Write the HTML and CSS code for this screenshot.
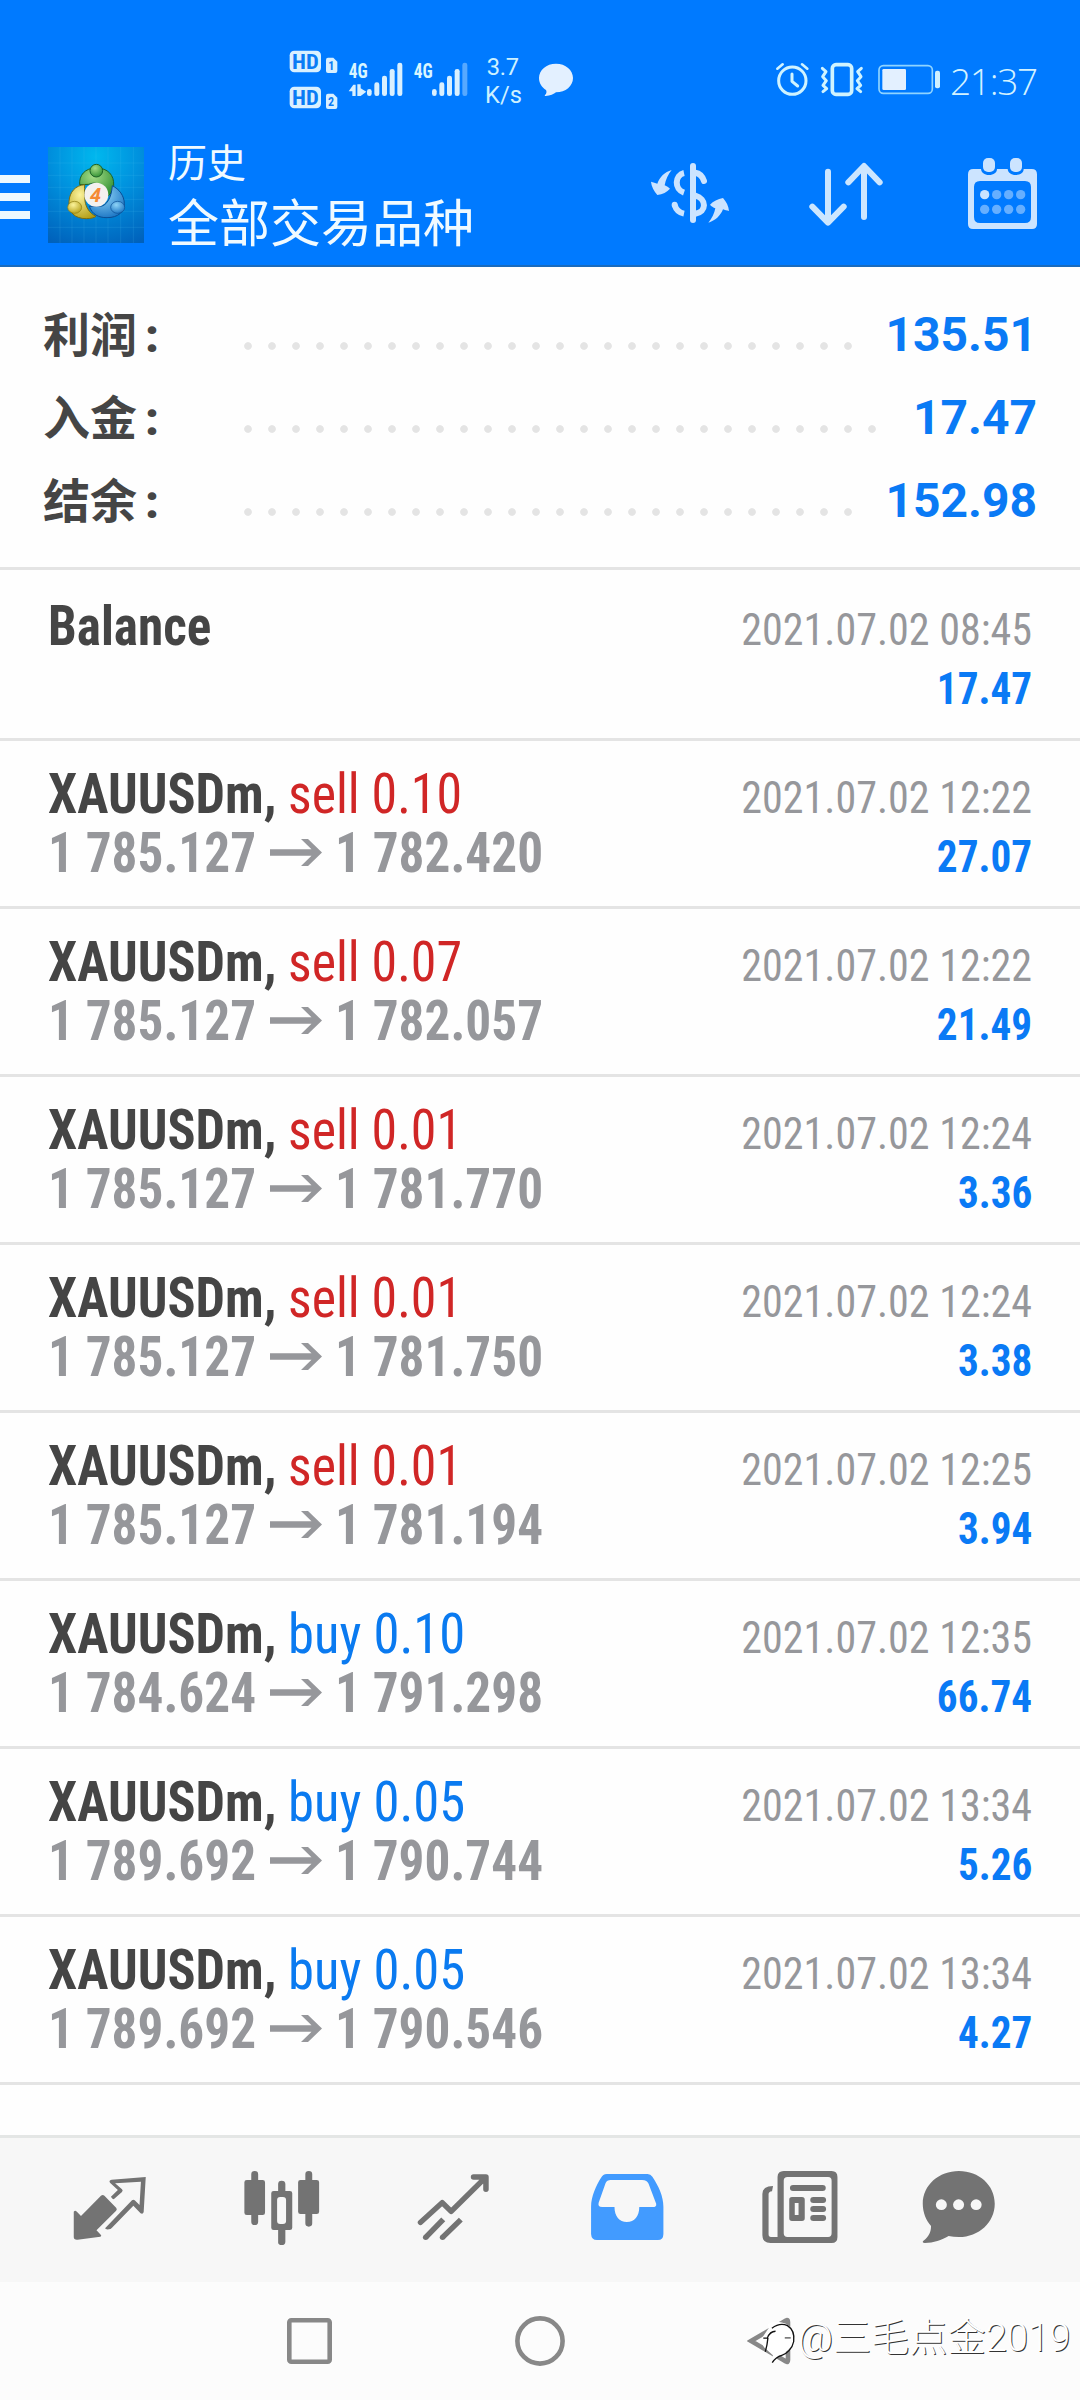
FILE: index.html
```
<!DOCTYPE html>
<html lang="zh-CN">
<head>
<meta charset="utf-8">
<title>历史</title>
<link rel="stylesheet" href="styles.css">
</head>
<body>
<div class="screen">
  <header class="top">
    <div class="status">
      <svg class="status-left" viewBox="0 0 960 300">
        <g fill="#d9f0ff">
          <rect x="59" y="62" width="94" height="65" rx="14"/>
          <rect x="59" y="170" width="94" height="65" rx="14"/>
          <path d="M174 83h16l12 12v28q0 6-6 6h-22q-6 0-6-6v-34q0-6 6-6z"/>
          <path d="M174 191h16l12 12v28q0 6-6 6h-22q-6 0-6-6v-34q0-6 6-6z"/>
          <path d="M236 184l14-20h7v34h-10v-14zM262 163h10v12l17 10-17 13h-10z"/>
          <rect x="291" y="177" width="14" height="21" rx="7"/>
          <rect x="313" y="157" width="15" height="41" rx="7"/>
          <rect x="336" y="137" width="15" height="61" rx="7"/>
          <rect x="359" y="117" width="15" height="81" rx="7"/>
          <rect x="382" y="98" width="15" height="100" rx="7"/>
          <rect x="486" y="177" width="14" height="21" rx="7"/>
          <rect x="508" y="157" width="15" height="41" rx="7"/>
          <rect x="531" y="137" width="15" height="61" rx="7"/>
          <rect x="554" y="117" width="15" height="81" rx="7"/>
          <rect x="577" y="98" width="15" height="100" rx="7" opacity=".4"/>
        </g>
        <path fill="#e3f0ff" d="M858 101c29 0 51 19 51 43s-22 43-51 43c-6 5-18 11-31 11-5 0-2-3 1-7 2-3 2-7 0-11-12-8-21-20-21-36 0-24 22-43 51-43z"/>
        <g class="badge">
          <text x="66" y="116" textLength="80" lengthAdjust="spacingAndGlyphs">HD</text>
          <text x="66" y="224" textLength="80" lengthAdjust="spacingAndGlyphs">HD</text>
        </g>
        <text class="sim" x="175" y="120">1</text>
        <text class="sim" x="174" y="229">2</text>
        <text class="gen" x="236" y="143" textLength="57" lengthAdjust="spacingAndGlyphs">4G</text>
        <text class="gen" x="431" y="143" textLength="57" lengthAdjust="spacingAndGlyphs">4G</text>
        <text class="rate" x="650" y="135" textLength="97">3.7</text>
        <text class="rate" x="645" y="219" textLength="111">K/s</text>
      </svg>
      <svg class="status-right" viewBox="0 0 552 240">
        <g fill="none" stroke="#cff3ff" stroke-linecap="round" stroke-linejoin="round">
          <circle cx="97" cy="122" r="41" stroke-width="9"/>
          <path d="M96 102v22l17 14" stroke-width="9"/>
          <path d="M52 86l16-13M142 86l-16-13" stroke-width="8" />
          <rect x="217" y="74" width="58" height="89" rx="11" stroke-width="11"/>
          <path d="M187 85l11 10-10 15 11 12-10 14 11 10-11 9M304 85l-11 10 10 15-11 12 10 14-11 10 11 9" stroke-width="9"/>
          <rect x="357" y="77" width="160" height="83" rx="13" stroke="#8fd4ff" stroke-width="5"/>
        </g>
        <rect x="367" y="87" width="71" height="63" rx="4" fill="#e3f0ff"/>
        <rect x="525" y="92" width="15" height="53" rx="6" fill="#cff0ff"/>
      </svg>
      <span class="clock">21:37</span>
    </div>
    <div class="toolbar">
      <div class="menu"><i></i><i></i><i></i></div>
      <svg class="logo" viewBox="144 51 288 288">
        <defs>
          <radialGradient id="sky" cx=".5" cy=".1" r="1"><stop offset="0" stop-color="#00b8ee"/><stop offset=".45" stop-color="#0091de"/><stop offset="1" stop-color="#0061bb"/></radialGradient>
          <radialGradient id="gr" cx=".4" cy=".3" r=".8"><stop offset="0" stop-color="#a5dc87"/><stop offset="1" stop-color="#278a2c"/></radialGradient>
          <radialGradient id="ye" cx=".4" cy=".3" r=".8"><stop offset="0" stop-color="#fbf39b"/><stop offset="1" stop-color="#b09a10"/></radialGradient>
          <radialGradient id="bl" cx=".4" cy=".3" r=".8"><stop offset="0" stop-color="#8fd4f7"/><stop offset="1" stop-color="#126ec0"/></radialGradient>
        </defs>
        <path fill="url(#sky)" d="M144 51h288v288H144z"/>
        <path stroke="#5cc8f2" stroke-width="2" opacity=".22" fill="none" d="M144 99h288M144 136h288M144 172h288M144 208h288M144 244h288M144 292h288M180 51v288M216 51v288M252 51v288M288 51v288M324 51v288M362 51v288M400 51v288"/>
        <path fill="url(#gr)" stroke="#1d6227" stroke-width="3" d="M239 164c-2-28 15-50 50-50s54 22 52 52c-1 15-6 24-18 33l-16-28c-10-13-27-14-41-8z"/>
        <path fill="url(#bl)" stroke="#0b4d93" stroke-width="3" d="M337 167c20 10 36 30 36 54s-18 42-52 42c-26 0-44-9-53-34h34c18-3 32-24 35-62z"/>
        <path fill="url(#ye)" stroke="#7c6d10" stroke-width="3" d="M254 164c-28 2-45 22-47 50-2 32 16 52 52 52 14 0 24-3 29-7-19-9-30-26-33-46-1-19-2-33-1-49z"/>
        <circle cx="289" cy="122" r="19" fill="url(#gr)" stroke="#1d6227" stroke-width="3"/>
        <ellipse cx="224" cy="232" rx="21" ry="18" fill="url(#ye)" stroke="#8d7b10" stroke-width="2"/>
        <ellipse cx="353" cy="232" rx="21" ry="18" fill="url(#bl)" stroke="#0b4d93" stroke-width="2"/>
        <circle cx="289" cy="194" r="36" fill="#f3f1ef"/>
        <text class="four" x="271" y="215">4</text>
      </svg>
      <div class="heading">
        <div class="sub">历史</div>
        <div class="main">全部交易品种</div>
      </div>
      <svg class="act dollar" viewBox="90 81 240 219">
        <g fill="#cce4ff">
          <path d="M155 120c-10 12-18 29-21 46 6 3 12 6 16 10-9 10-22 17-38 19-10-11-18-26-19-40 7 2 13 4 19 6 7-20 22-35 43-41z"/>
          <path d="M265 278c11-13 18-28 21-43-6-3-12-6-16-11 10-10 23-17 39-20 10 11 17 25 18 39-6-1-13-3-18-5-8 20-23 34-44 40z"/>
          <rect x="210" y="99" width="18" height="180" rx="9"/>
        </g>
        <path fill="none" stroke="#cce4ff" stroke-width="18" d="M192 129c-28 6-30 49 0 59M192 251c-15-3-24-12-28-26"/>
        <path fill="none" stroke="#cce4ff" stroke-width="18" stroke-linecap="round" d="M226 128c14 2 21 9 26 25M226 197c35 10 34 49 0 54M164 224v1"/>
      </svg>
      <svg class="act sort" viewBox="561 81 234 219">
        <path fill="none" stroke="#cce6ff" stroke-width="18" stroke-linecap="round" stroke-linejoin="round" d="M624 125v152M577 230l47 48 47-48M732 261V109M685 157l47-49 47 49"/>
      </svg>
      <svg class="act cal" viewBox="1041 81 213 219">
        <path fill="#cce4ff" fill-rule="evenodd" d="M1060 117h23c1 11 10 18 24 18s24-7 24-18h32c1 11 10 18 24 18s24-7 24-18h24q16 0 16 16v149q0 15-15 15h-177q-15 0-15-15V133q0-16 16-16zM1080 153q-18 0-18 18v90q0 18 18 18h135q18 0 18-18v-90q0-18-18-18z"/>
        <rect x="1089" y="84" width="36" height="42" rx="15" fill="#cce4ff"/>
        <rect x="1170" y="84" width="36" height="42" rx="15" fill="#cce4ff"/>
        <circle cx="1094" cy="194" r="14" fill="#cce4ff"/>
        <g fill="#66afff"><circle cx="1130" cy="194" r="14"/><circle cx="1166" cy="194" r="14"/><circle cx="1202" cy="194" r="14"/><circle cx="1094" cy="238" r="14"/><circle cx="1130" cy="238" r="14"/><circle cx="1166" cy="238" r="14"/><circle cx="1202" cy="238" r="14"/></g>
      </svg>
    </div>
  </header>

  <section class="summary">
    <div class="sum"><span class="label">利润<b>:</b></span><span class="dots"></span><span class="amount">135.51</span></div>
    <div class="sum"><span class="label">入金<b>:</b></span><span class="dots"></span><span class="amount">17.47</span></div>
    <div class="sum"><span class="label">结余<b>:</b></span><span class="dots"></span><span class="amount">152.98</span></div>
  </section>

  <main class="deals">
    <article class="deal"><div class="l"><p><b class="name">Balance</b></p></div><div class="r"><time>2021.07.02 08:45</time><b>17.47</b></div></article>
    <article class="deal"><div class="l"><p><b class="sym">XAUUSDm,</b><span class="sell">sell 0.10</span></p><p class="px"><b>1 785.127</b><svg class="arrow" viewBox="0 0 52 27"><path d="M31 0h7l14 13.500L38 27h-7l10.500-10.200H0v-6.500h41.500z"/></svg><b>1 782.420</b></p></div><div class="r"><time>2021.07.02 12:22</time><b>27.07</b></div></article>
    <article class="deal"><div class="l"><p><b class="sym">XAUUSDm,</b><span class="sell">sell 0.07</span></p><p class="px"><b>1 785.127</b><svg class="arrow" viewBox="0 0 52 27"><path d="M31 0h7l14 13.500L38 27h-7l10.500-10.200H0v-6.500h41.500z"/></svg><b>1 782.057</b></p></div><div class="r"><time>2021.07.02 12:22</time><b>21.49</b></div></article>
    <article class="deal"><div class="l"><p><b class="sym">XAUUSDm,</b><span class="sell">sell 0.01</span></p><p class="px"><b>1 785.127</b><svg class="arrow" viewBox="0 0 52 27"><path d="M31 0h7l14 13.500L38 27h-7l10.500-10.200H0v-6.500h41.500z"/></svg><b>1 781.770</b></p></div><div class="r"><time>2021.07.02 12:24</time><b>3.36</b></div></article>
    <article class="deal"><div class="l"><p><b class="sym">XAUUSDm,</b><span class="sell">sell 0.01</span></p><p class="px"><b>1 785.127</b><svg class="arrow" viewBox="0 0 52 27"><path d="M31 0h7l14 13.500L38 27h-7l10.500-10.200H0v-6.500h41.500z"/></svg><b>1 781.750</b></p></div><div class="r"><time>2021.07.02 12:24</time><b>3.38</b></div></article>
    <article class="deal"><div class="l"><p><b class="sym">XAUUSDm,</b><span class="sell">sell 0.01</span></p><p class="px"><b>1 785.127</b><svg class="arrow" viewBox="0 0 52 27"><path d="M31 0h7l14 13.500L38 27h-7l10.500-10.200H0v-6.500h41.500z"/></svg><b>1 781.194</b></p></div><div class="r"><time>2021.07.02 12:25</time><b>3.94</b></div></article>
    <article class="deal"><div class="l"><p><b class="sym">XAUUSDm,</b><span class="buy">buy 0.10</span></p><p class="px"><b>1 784.624</b><svg class="arrow" viewBox="0 0 52 27"><path d="M31 0h7l14 13.500L38 27h-7l10.500-10.200H0v-6.500h41.500z"/></svg><b>1 791.298</b></p></div><div class="r"><time>2021.07.02 12:35</time><b>66.74</b></div></article>
    <article class="deal"><div class="l"><p><b class="sym">XAUUSDm,</b><span class="buy">buy 0.05</span></p><p class="px"><b>1 789.692</b><svg class="arrow" viewBox="0 0 52 27"><path d="M31 0h7l14 13.500L38 27h-7l10.500-10.200H0v-6.500h41.500z"/></svg><b>1 790.744</b></p></div><div class="r"><time>2021.07.02 13:34</time><b>5.26</b></div></article>
    <article class="deal"><div class="l"><p><b class="sym">XAUUSDm,</b><span class="buy">buy 0.05</span></p><p class="px"><b>1 789.692</b><svg class="arrow" viewBox="0 0 52 27"><path d="M31 0h7l14 13.500L38 27h-7l10.500-10.200H0v-6.500h41.500z"/></svg><b>1 790.546</b></p></div><div class="r"><time>2021.07.02 13:34</time><b>4.27</b></div></article>
  </main>

  <nav class="tabs">
    <svg viewBox="207 144 225 240" preserveAspectRatio="none"><g fill="#737373"><path d="M215 275q4-6 9 0l12 13 58-61q5-4 10 0l34 36q4 4 0 9l-57 59 13 14q3 4-2 5l-66 9q-11 1-11-8z"/><path fill-rule="evenodd" d="M319 183q1-3 6-4l99-8-6 105q-2 8-9 4l-21-23-62 66q-4 5-9 5-10 1-11-3l78-84q4-4 8 0l14 14 4-70-75 5 20 18q4 4 0 8l-24 22q-5-1-8-8l20-20-22-21q-3-3-2-6z"/></g></svg>
    <svg viewBox="705 144 225 240" preserveAspectRatio="none"><path fill="#737373" fill-rule="evenodd" d="M739 153q10 0 10 10v17h13q7 0 7 7v91q0 7-7 7h-13v20q0 10-10 10t-10-10v-20h-13q-7 0-7-7v-91q0-7 7-7h13v-17q0-10 10-10zM896 153q10 0 10 10v17h13q7 0 7 7v88q0 7-7 7h-13v28q0 10-10 10t-10-10v-28h-14q-7 0-7-7v-88q0-7 7-7h14v-17q0-10 10-10zM817 182q11 0 11 10v21h13q7 0 7 7v103q0 7-7 7h-13v35q0 10-11 10t-10-10v-35h-13q-7 0-7-7V220q0-7 7-7h13v-21q0-10 10-10zM813 231q-9 0-9 9v63q0 9 9 9h8q9 0 9-9v-63q0-9-9-9z"/></svg>
    <svg viewBox="1206 144 225 240" preserveAspectRatio="none"><path fill="none" stroke="#737373" stroke-width="16" stroke-linejoin="round" stroke-linecap="round" d="M1222 307l63-59 26 26 97-99M1376 171h36v37"/><path stroke="#737373" stroke-width="16" d="M1237 352l51-54M1286 352l53-53"/><g fill="#737373"><circle cx="1237" cy="352" r="8"/><circle cx="1286" cy="352" r="8"/></g></svg>
    <svg viewBox="140 144 225 240" preserveAspectRatio="none"><path fill="#429bff" fill-rule="evenodd" d="M192 162h118q9 0 14 8c18 28 32 58 32 90v82q0 18-16 18H163q-16 0-17-18v-82c0-32 16-66 29-87q5-10 17-11zM203 180q-11 0-15 10l-20 58q-3 13 10 13h36c0 28 14 45 36 45s36-17 36-45h39q12 0 10-10l-22-60q-4-10-19-11z"/></svg>
    <svg viewBox="642 144 225 240" preserveAspectRatio="none"><path fill="#737373" fill-rule="evenodd" d="M708 153h139q17 0 17 18v180q0 18-17 18H670q-24 0-24-23V222q0-24 31-24l-3 16q-10 1-10 9v120q0 8 7 8h19V171q0-18 18-18zM719 171q-11 0-11 11v158q0 11 11 11h118q10 0 10-11V182q0-11-10-11z"/><g fill="#737373"><rect x="726" y="195" width="104" height="18" rx="9"/><rect x="785" y="231" width="46" height="18" rx="9"/><rect x="785" y="258" width="46" height="18" rx="9"/><rect x="785" y="285" width="46" height="18" rx="9"/><path fill-rule="evenodd" d="M732 231h29q8 0 8 8v56q0 8-8 8h-29q-8 0-8-8v-56q0-8 8-8zM740 249v36h11v-36z"/></g></svg>
    <svg viewBox="1101 144 225 240" preserveAspectRatio="none"><path fill="#737373" d="M1214 153c58 0 104 42 104 98s-46 100-104 100q-16 0-30-3c-20 12-44 21-69 21-6 0-8-4-4-7 16-12 22-26 22-44-14-17-24-40-24-67 0-56 47-98 105-98z"/><g fill="#f7f7f7"><circle cx="1163" cy="254" r="16"/><circle cx="1213" cy="254" r="16"/><circle cx="1264" cy="254" r="16"/></g></svg>
  </nav>

  <footer class="sys">
    <svg class="square" viewBox="0 0 45 46"><rect x="2.3" y="2.3" width="40.4" height="41.4" rx="2"/></svg>
    <svg class="ring" viewBox="0 0 50 50"><circle cx="25" cy="25" r="22.6"/></svg>
    <svg class="back" viewBox="0 0 50 50"><path d="M4 25L39 4.500Q41 3 41 6v38q0 3-2 1.500z"/></svg>
    <div class="mark">
      <svg viewBox="60 50 112 145"><path fill="#fff" d="M60 122l26-38-2-12c14-14 68-12 78 28 4 32-14 54-37 62l-28 24 2-20-26-24z"/><path fill="none" stroke="#111" stroke-width="4" d="M96 84q24-18 47-8c18 11 21 32 19 48-4 22-22 38-36 42q-18 5-29 22M70 114h12q8-21 25-21M84 113q-2 22-8 42"/><path stroke="#777" stroke-width="5" d="M135 113h18"/></svg>
      <span>@三毛点金2019</span>
    </div>
  </footer>
</div>
</body>
</html>
```
FILE: styles.css
```
* { box-sizing: border-box; }
body { margin: 0; background: #fefefe; }
p { margin: 0; }
svg { display: block; flex: none; }
.screen {
  width: 1080px;
  height: 2400px;
  display: flex;
  flex-direction: column;
  overflow: hidden;
  background: #fefefe;
  font-family: Roboto, "Noto Sans CJK SC", sans-serif;
}
.top { height: 267px; background: #007aff; border-bottom: 2px solid #1a6bbd; }
.status { height: 130px; display: flex; }
.status-left { width: 320px; height: 100px; margin: 30px 0 0 270px; }
.status-right { width: 184px; height: 80px; margin: 40px 0 0 170px; }
.clock {
  margin: 53px 0 0 6px;
  font: 300 37px/56px "Open Sans", sans-serif;
  letter-spacing: -1.3px;
  color: #d3f2ff;
}
.badge { font: 700 60px "Roboto Condensed", sans-serif; fill: #0a7cf5; }
.sim { font: 700 36px "Roboto Condensed", sans-serif; fill: #0a7cf5; }
.gen { font: 700 61px "Roboto Condensed", sans-serif; fill: #d9f6ff; }
.rate { font: 400 71px Roboto, sans-serif; fill: #cdf1ff; }
.four { font: italic 700 58px "Open Sans", sans-serif; fill: #f58a34; }

.toolbar { display: flex; align-items: flex-start; height: 135px; }
.menu { display: flex; flex-direction: column; gap: 10px; width: 30px; margin: 45px 18px 0 0; }
.menu i { height: 8px; background: #ecf8ff; }
.logo { width: 96px; height: 96px; margin-top: 17px; }
.heading { width: 480px; margin: 2px 0 0 24px; color: #f0faff; font-family: "Noto Sans CJK SC", sans-serif; }
.sub { font-size: 39px; line-height: 57px; }
.main { font-size: 51px; line-height: 63px; }
.act { height: 73px; margin-top: 27px; }
.dollar { width: 80px; margin-left: 2px; }
.sort { width: 78px; margin-left: 77px; }
.cal { width: 71px; margin-left: 82px; }

.summary { height: 303px; padding: 26px 0 0 43px; border-bottom: 3px solid #e4e4e4; }
.sum { display: flex; height: 83px; padding-right: 43px; line-height: 83px; }
.label { width: 199px; flex: none; margin-top: -3px; font: 700 47px/83px "Noto Sans CJK SC", sans-serif; color: #454545; }
.label b { display: inline-block; margin-left: 8px; font-family: Roboto, sans-serif; }
.dots {
  flex: 1;
  margin-right: 22px;
  background: radial-gradient(circle at 6px 53px, #e4e4e4 3.4px, transparent 4.2px) 0 0 / 24px 83px repeat-x;
}
.amount { font-size: 48px; font-weight: 700; color: #0a7af5; }

.deals { flex: 1; padding-top: 3px; font-family: "Roboto Condensed", sans-serif; }
.deal { height: 168px; padding: 24px 48px 0; display: flex; justify-content: space-between; border-bottom: 3px solid #e4e4e4; }
.l p { height: 59px; display: flex; font-size: 55px; line-height: 59px; white-space: pre; }
.l b, .l span { transform: scaleX(.932); transform-origin: 0 0; }
.name, .sym { color: #454545; }
.l .sym { width: 240px; transform: scaleX(.948); }
.l .sell { color: #d02626; transform: scaleX(.942); }
.l .buy { color: #0a7af0; transform: scaleX(.957); }
.px { color: #96979b; }
.px b { width: 222px; }
.arrow { width: 52px; height: 27px; margin: 14.500px 13px 0 0; fill: #96979b; }
.r { padding-top: 3px; display: flex; flex-direction: column; align-items: flex-end; font-size: 45px; line-height: 59px; height: 124px; }
.r time { color: #96979b; transform: scaleX(.935); transform-origin: 100% 0; }
.r b { color: #0a7af5; transform: scaleX(.915); transform-origin: 100% 0; }

.tabs { height: 147px; display: flex; gap: 95px; padding: 30px 0 0 71.3px; background: #f7f7f7; border-top: 3px solid #e4e6e5; }
.tabs svg { width: 77.5px; height: 80px; }
.tabs svg:nth-child(3) { margin-right: 1px; }
.tabs svg:first-child { margin-right: -1px; }
.tabs svg:last-child { margin-left: -13.5px; }

.sys { height: 118px; display: flex; align-items: flex-start; padding-left: 286.5px; background: #fcfcfc; position: relative; }
.sys > svg { fill: none; stroke: #888; stroke-width: 4.6; }
.square { width: 45px; height: 46px; margin-top: 36px; }
.ring { width: 50px; height: 50px; margin: 34px 0 0 183px; }
.back { width: 50px; height: 50px; margin: 34px 0 0 182px; }
.mark { position: absolute; left: 760px; top: 28px; display: flex; color: #fff; white-space: nowrap; }
.mark svg { width: 37px; height: 48px; margin-top: 7px; }
.mark span { margin-left: 1px; font: 300 38.2px/56px Roboto, "Noto Sans CJK SC", sans-serif; text-shadow: 1px 1px 0 #333; }
```
